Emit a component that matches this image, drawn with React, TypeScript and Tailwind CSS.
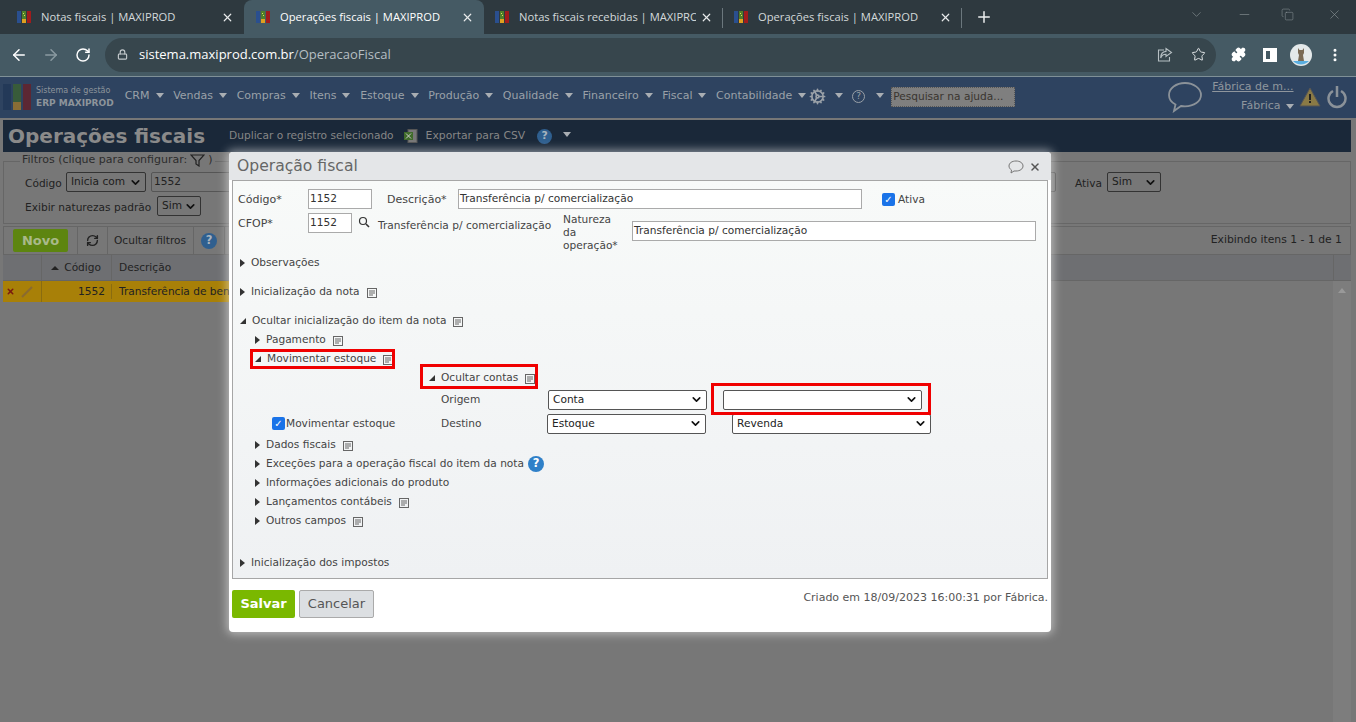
import { ArrowLeft, ArrowRight, ChevronDown, Cog, Copy, EllipsisVertical, Lock, Minus, Plus, Puzzle, RefreshCw, RotateCw, Star, X } from "lucide-react";

const ui = "font-['DejaVu_Sans',sans-serif]";

function Favicon() {
  return (
    <svg width="14" height="14" viewBox="0 0 14 14" className="shrink-0">
      <rect x="0" y="1" width="4" height="12" fill="#2a4f8f" />
      <rect x="5" y="1" width="4" height="12" fill="#4f7f2a" />
      <rect x="10" y="1" width="4" height="12" fill="#a01c1c" />
      <rect x="5" y="9" width="4" height="4" fill="#e0a020" />
      <rect x="6" y="3" width="1" height="1" fill="#d8e060" />
      <rect x="7" y="5" width="1" height="1" fill="#d8e060" />
    </svg>
  );
}

function Tab({ title, active, className, sep }: { title: string; active?: boolean; className: string; sep?: boolean }) {
  return (
    <div className={`relative flex h-[34px] items-center pr-[10px] text-[11.2px] font-['Open_Sans',sans-serif] ${className} ${active ? "rounded-t-lg bg-[#455a64] text-white" : "text-[#d4d9db]"}`}>
      <Favicon />
      <span className="min-w-0 flex-1 overflow-hidden whitespace-nowrap pl-[10px]">{title}</span>
      <X size={13} strokeWidth={2.2} className="ml-1 shrink-0 text-[#e8eaeb]" />
      {sep && <div className="absolute right-0 top-[8px] h-[20px] w-px bg-[#6b777d]" />}
    </div>
  );
}

function Caret({ className = "" }: { className?: string }) {
  return <span className={`inline-block h-0 w-0 border-x-[4px] border-t-[5px] border-x-transparent border-t-[#a9aeb3] ${className}`} />;
}

function Menu({ label }: { label: string }) {
  return (
    <span className="flex items-center gap-[6px] whitespace-nowrap text-[11px] text-[#9aa1a8]">
      {label}
      <Caret className="mb-[3px]" />
    </span>
  );
}

function Select({ value, w }: { value: string; w: string }) {
  return (
    <span className={`flex h-[20px] ${w} items-center justify-between rounded-[2px] border border-[#555] bg-white pl-[4px] pr-[3px] text-[10.6px] text-[#222]`}>
      <span>{value}</span>
      <ChevronDown size={13} strokeWidth={3} className="text-[#111]" />
    </span>
  );
}

function DimSelect({ value, w }: { value: string; w: string }) {
  return (
    <span className={`flex h-[20px] ${w} shrink-0 items-center justify-between rounded-[2px] border border-[#333] bg-[#777] pl-[4px] pr-[3px] text-[10.6px] text-[#1c1c1c]`}>
      <span>{value}</span>
      <ChevronDown size={13} strokeWidth={3} className="text-[#111]" />
    </span>
  );
}

function DocIcon() {
  return (
    <svg width="10" height="10" viewBox="0 0 10 10" className="mt-[3px] shrink-0">
      <rect x="0.5" y="0.5" width="9" height="9" fill="none" stroke="#666" />
      <path d="M2 3h6M2 5h6M2 7h4" stroke="#666" />
    </svg>
  );
}

function Help({ size = 16, dim = false }: { size?: number; dim?: boolean }) {
  return (
    <span
      style={{ width: size, height: size, fontSize: size * 0.72 }}
      className={`flex shrink-0 items-center justify-center rounded-full font-bold ${dim ? "bg-[#2f5f8f] text-[#a9b4be]" : "bg-[#2f80c8] text-white"}`}
    >
      ?
    </span>
  );
}

function Tree({ label, open, doc, extra }: { label: string; open?: boolean; doc?: boolean; extra?: React.ReactNode }) {
  return (
    <div className="flex h-[19px] items-center whitespace-nowrap text-[10.6px] leading-[19px] text-[#444]">
      {open ? (
        <span className="ml-[2px] mr-[6px] h-0 w-0 border-b-[6px] border-l-[6px] border-b-[#333] border-l-transparent" />
      ) : (
        <span className="ml-[2px] mr-[6px] h-0 w-0 border-y-[4px] border-l-[5px] border-y-transparent border-l-[#333]" />
      )}
      {label}
      {doc && <span className="ml-[7px] flex"><DocIcon /></span>}
      {extra}
    </div>
  );
}

function Field({ value, w, className = "" }: { value: string; w: string; className?: string }) {
  return <span className={`flex h-[20px] ${w} shrink-0 items-center border border-[#aaa] bg-white px-[1px] text-[10.6px] text-[#333] ${className}`}>{value}</span>;
}

function Check() {
  return <span className="inline-block h-[13px] w-[13px] shrink-0 rounded-[2px] bg-[#1a73e8] text-center align-middle text-[10px] font-bold leading-[13px] text-white">✓</span>;
}

export default function App() {
  return (
    <div className={`relative h-[722px] w-[1356px] overflow-hidden bg-[#777] ${ui}`}>
      {/* browser chrome */}
      <div className="flex h-[34px] items-start bg-[#2e393f]">
        <Tab title="Notas fiscais | MAXIPROD" className="w-[244px] pl-[17px]" />
        <Tab title="Operações fiscais | MAXIPROD" active className="w-[240px] pl-[12px]" />
        <Tab title="Notas fiscais recebidas | MAXIPROD" className="w-[239px] pl-[11px]" sep />
        <Tab title="Operações fiscais | MAXIPROD" className="w-[239px] pl-[11px]" sep />
        <Plus size={18} strokeWidth={2} className="ml-[13px] mt-[8px] text-[#eceeef]" />
        <div className="ml-auto flex pt-[7px] text-[#8b9599]">
          <ChevronDown size={15} strokeWidth={1} className="mr-[33px]" />
          <Minus size={15} strokeWidth={1} className="mr-[29px]" />
          <Copy size={13} strokeWidth={1} className="mr-[33px] mt-px" />
          <X size={15} strokeWidth={1} className="mr-[14px]" />
        </div>
      </div>
      <div className="flex h-[43px] items-center border-b border-[#7f9097] bg-[#455a64] pb-px">
        <ArrowLeft size={18} strokeWidth={2} className="ml-[10px] text-white" />
        <ArrowRight size={18} strokeWidth={2} className="ml-[14px] text-[#8a9aa1]" />
        <RotateCw size={16} strokeWidth={2.2} className="ml-[15px] text-white" />
        <div className="ml-[14px] flex h-[34px] w-[1111px] items-center rounded-full bg-[#37464d] pl-[12px] font-['Open_Sans',sans-serif] text-[13px]">
          <Lock size={11} strokeWidth={2.5} className="text-[#c4cacd]" />
          <span className="ml-[11px] text-white">sistema.maxiprod.com.br</span>
          <span className="text-[#b6bfc3]">/OperacaoFiscal</span>
          <svg width="16" height="16" viewBox="0 0 16 16" fill="none" stroke="#b6bfc3" strokeWidth="1.100" className="ml-auto">
            <path d="M7 3H1.500v11h11v-4" />
            <path d="M9 1.500l5.500 4-5.500 4V7.200C6.500 7.200 4.500 8.500 3.700 11c0-4 2-6.300 5.300-6.600z" />
          </svg>
          <Star size={15} strokeWidth={1.6} className="ml-[18px] mr-[10px] text-[#dfe3e5]" />
        </div>
        <Puzzle size={15} fill="white" className="ml-[15px] text-white" />
        <span className="ml-[17px] h-[14px] w-[14px] border-[3px] border-r-[7px] border-white" />
        <svg width="22" height="22" viewBox="0 0 22 22" className="ml-[13px]">
          <circle cx="11" cy="11" r="11" fill="#e4e9ea" />
          <path d="M3 17h16a11 11 0 0 1-16 0z" fill="#5aaee0" />
          <path d="M8 4l1.500 2h3L14 4v5l-1 2 1 6H8l1-6-1-2z" fill="#7a6a55" />
        </svg>
        <EllipsisVertical size={16} strokeWidth={2.5} className="ml-[15px] text-white" />
      </div>

      {/* app menu */}
      <div className="flex h-[41px] items-center bg-[#2e4360] pb-[2px]">
        <div className="ml-[3px] opacity-60"><svg width="28" height="26" viewBox="0 0 28 26"><rect width="8" height="26" fill="#1c3454" /><rect x="10" width="8" height="26" fill="#3f6b22" /><rect x="20" width="8" height="26" fill="#7c1616" /><rect x="10" y="18" width="8" height="8" fill="#c58a1a" /></svg></div>
        <div className="ml-[5px] mr-[11px] flex flex-col text-[#8d949b]">
          <span className="text-[8px] leading-[13px]">Sistema de gestão</span>
          <span className="text-[9px] font-bold leading-[12px]">ERP MAXIPROD</span>
        </div>
        <div className="flex items-center gap-[9.67px]">
          {["CRM", "Vendas", "Compras", "Itens", "Estoque", "Produção", "Qualidade", "Financeiro", "Fiscal", "Contabilidade"].map((m) => (
            <Menu key={m} label={m} />
          ))}
        </div>
        <Cog size={17} strokeWidth={2.4} className="ml-[3px] text-[#9aa1a8]" />
        <Caret className="ml-[9px] mb-[3px]" />
        <span className="ml-[9px] flex h-[13px] w-[13px] items-center justify-center rounded-full border border-[#9aa1a8] text-[9px] text-[#9aa1a8]">?</span>
        <Caret className="ml-[11px] mb-[3px]" />
        <span className="ml-[7px] flex h-[20px] w-[124px] items-center border border-dotted border-[#555] bg-[#7f7f7f] pl-px text-[10.6px] text-[#3a3530]">Pesquisar na ajuda...</span>
        <svg width="36" height="32" viewBox="0 0 36 32" className="ml-[152px]">
          <path d="M18 2C9 2 2 7.500 2 14c0 4 2.500 7.500 6.500 9.500L7 30l7-5c1.300.2 2.600.3 4 .3 9 0 16-5 16-11.300S27 2 18 2z" fill="none" stroke="#8b9299" strokeWidth="1.800" />
        </svg>
        <div className="ml-[9px] flex flex-col items-end text-[11px] text-[#8f969d]">
          <span className="underline">Fábrica de m...</span>
          <span className="mt-[3px] flex items-center gap-[5px]">Fábrica<Caret /></span>
        </div>
        <svg width="22" height="22" viewBox="0 0 22 22" className="ml-[5px]"><path d="M11 2 21 20H1z" fill="#8a7a45" stroke="#555" /><rect x="10" y="8" width="2" height="6" fill="#222" /><rect x="10" y="15" width="2" height="2" fill="#222" /></svg>
        <svg width="20" height="24" viewBox="0 0 20 24" className="ml-[6px]"><path d="M6 6a8.500 8.500 0 1 0 8 0M10 1v11" fill="none" stroke="#8b9299" strokeWidth="2.500" /></svg>
      </div>

      {/* dimmed page */}
      <div className="ml-[1px] mr-[3px] border-x-2 border-t-2 border-[#777]">
        <div className="flex h-[32px] items-center bg-[#1a2839] pl-[5px]">
          <span className="text-[20px] font-bold text-[#8a8a8a]">Operações fiscais</span>
          <span className="ml-[24px] text-[10.6px] text-[#868686]">Duplicar o registro selecionado</span>
          <svg width="17" height="14" viewBox="0 0 17 14" className="ml-[10px]">
            <rect x="4" y="0.5" width="9" height="13" fill="#777" stroke="#555" />
            <rect x="0" y="3" width="9" height="8" fill="#3f6b2a" />
            <path d="M2 4.500l5 5M7 4.500l-5 5" stroke="#ccc" />
          </svg>
          <span className="ml-[5px] text-[10.8px] text-[#868686]">Exportar para CSV</span>
          <span className="ml-[12px]"><Help size={15} dim /></span>
          <Caret className="ml-[11px] mb-[3px]" />
        </div>
        <div className="relative mt-[9px] h-[63px] border border-[#666] pl-[21px] pt-[10px] text-[10.6px] text-[#222]">
          <span className="absolute left-[16px] -top-[10px] flex items-center gap-[3px] bg-[#777] px-[2px] text-[11px] text-[#2c2c2c]">
            Filtros (clique para configurar:
            <svg width="15" height="13" viewBox="0 0 15 13" fill="none" stroke="#222" strokeWidth="1.200"><path d="M1 1h13L9 6.500V12L6 10V6.500z" /></svg>
            )
          </span>
          <div className="flex items-center">
            <span className="w-[41px] pt-[3px]">Código</span>
            <DimSelect value="Inicia com" w="w-[80px]" />
            <span className="ml-[5px] flex h-[20px] w-[905px] shrink-0 items-center rounded-[2px] border border-[#555] pl-[2px]">1552</span>
            <span className="ml-[19px] w-[32px] pt-[3px]">Ativa</span>
            <DimSelect value="Sim" w="w-[54px]" />
          </div>
          <div className="mt-[4px] flex items-center">
            <span className="w-[132px] whitespace-nowrap pt-[3px]">Exibir naturezas padrão</span>
            <DimSelect value="Sim" w="w-[44px]" />
          </div>
        </div>
        <div className="mt-[2px] flex h-[29px] items-center border border-[#666] text-[10.6px] text-[#222]">
          <span className="ml-[9px] flex h-[23px] w-[55px] items-center justify-center rounded-[2px] bg-[#5d8510] text-[13px] font-bold text-[#a9b98a]">Novo</span>
          <span className="ml-[9px] h-full border-l border-[#666]" />
          <span className="flex w-[29px] justify-center"><RefreshCw size={13} strokeWidth={2.6} className="text-[#222]" /></span>
          <span className="h-full border-l border-[#666]" />
          <span className="w-[85px] whitespace-nowrap pl-[6px]">Ocultar filtros</span>
          <span className="flex h-full items-center border-l border-[#666] px-[7px]"><Help size={16} dim /></span>
          <span className="h-full border-l border-[#666]" />
          <span className="ml-auto mr-[8px] text-[10.8px]">Exibindo itens 1 - 1 de 1</span>
        </div>
        <div className="flex h-[26px] items-center border-b border-[#666] bg-[#6e6f72] text-[10.6px] text-[#222]">
          <span className="h-full w-[39px] border-r border-[#666]" />
          <span className="flex h-full w-[70px] items-center justify-end border-r border-[#666] pr-[10px]">
            <span className="mr-[5px] h-0 w-0 border-x-[4px] border-b-[4px] border-x-transparent border-b-[#222]" />
            Código
          </span>
          <span className="pl-[7px]">Descrição</span>
          <span className="ml-auto h-full w-[18px] border-l border-[#666]" />
        </div>
        <div className="flex items-start">
          <div className="flex h-[22px] w-[500px] items-center border-b border-[#777] bg-[#a88008] text-[10.6px] text-[#222]">
            <span className="flex h-full w-[39px] items-center border-r border-[#8a6c10] pl-[3px]">
              <X size={9} strokeWidth={4} className="text-[#7a1a10]" />
              <svg width="13" height="13" viewBox="0 0 13 13" className="ml-[6px]"><path d="M1 12 11 2" stroke="#8a6a30" strokeWidth="2" /></svg>
            </span>
            <span className="w-[70px] border-r border-[#8a6c10] pr-[6px] text-right">1552</span>
            <span className="pl-[7px]">Transferência de bens</span>
          </div>
          <span className="ml-auto flex h-[441px] w-[18px] justify-center bg-[#7d7d7d] pt-[7px]">
            <span className="h-0 w-0 border-x-[4px] border-b-[5px] border-x-transparent border-b-[#999]" />
          </span>
        </div>
      </div>

      {/* modal */}
      <div className="absolute left-[229px] top-[152px] h-[480px] w-[822px] rounded-[4px] bg-white shadow-[0_0_10px_2px_rgba(255,255,255,0.5)]">
        <div className="flex h-[28px] items-center rounded-t-[4px] bg-[#e4e6e8] pl-[8px] pr-[10px] pt-[2px]">
          <span className="text-[15.6px] text-[#666]">Operação fiscal</span>
          <svg width="16" height="14" viewBox="0 0 16 14" className="ml-auto"><path d="M8 1C4 1 1 3 1 6c0 1.800 1 3 2.500 4L3 13l3-2h2c4 0 7-2 7-5S12 1 8 1z" fill="none" stroke="#777" /></svg>
          <X size={12} strokeWidth={3} className="ml-[5px] text-[#555]" />
        </div>
        <div className="mx-[3px] h-[399px] border border-[#a6a6a6] bg-linear-to-b from-[#f8faf9] to-[#eff1f3] pl-[5px] pt-[8px] text-[11px] text-[#444]">
          <div className="flex h-[20px] items-center">
            <span className="w-[70px] pt-[2px]">Código*</span>
            <Field value="1152" w="w-[64px]" />
            <span className="ml-[15px] w-[71px] pt-[2px]">Descrição*</span>
            <Field value="Transferência p/ comercialização" w="w-[404px]" />
            <span className="ml-[20px] flex"><Check /></span>
            <span className="ml-[3px] pt-[2px] text-[10.6px]">Ativa</span>
          </div>
          <div className="mt-[4px] flex h-[38px]">
            <span className="mt-[3px] w-[70px]">CFOP*</span>
            <Field value="1152" w="w-[44px]" />
            <svg width="12" height="12" viewBox="0 0 12 12" className="ml-[6px] mt-[3px]"><circle cx="5" cy="5" r="3.500" fill="none" stroke="#333" strokeWidth="1.200" /><path d="M8 8l3 3" stroke="#333" strokeWidth="1.600" /></svg>
            <span className="ml-[8px] mt-[5px] w-[185px] whitespace-nowrap text-[10.6px]">Transferência p/ comercialização</span>
            <span className="w-[69px] text-[10.6px] leading-[13px]">Natureza<br />da<br />operação*</span>
            <Field value="Transferência p/ comercialização" w="w-[404px]" className="mt-[8px]" />
          </div>
          <div className="mt-[2px] flex flex-col">
            <Tree label="Observações" />
            <div className="mt-[10px]"><Tree label="Inicialização da nota" doc /></div>
            <div className="mt-[10px]"><Tree label="Ocultar inicialização do item da nota" open doc /></div>
            <div className="flex flex-col pl-[15px]">
              <Tree label="Pagamento" doc />
              <Tree label="Movimentar estoque" open doc />
              <div className="ml-[174px]"><Tree label="Ocultar contas" open doc /></div>
              <div className="flex h-[24px] items-center pt-[1px] text-[10.6px]">
                <span className="ml-[188px] w-[107px]">Origem</span>
                <Select value="Conta" w="w-[159px]" />
                <span className="ml-[16px]"><Select value="" w="w-[199px]" /></span>
              </div>
              <div className="flex h-[24px] items-center pt-[1px] text-[10.6px]">
                <span className="ml-[19px] flex"><Check /></span>
                <span className="w-[156px] pl-px">Movimentar estoque</span>
                <span className="w-[106px]">Destino</span>
                <Select value="Estoque" w="w-[159px]" />
                <span className="ml-[26px]"><Select value="Revenda" w="w-[199px]" /></span>
              </div>
              <Tree label="Dados fiscais" doc />
              <Tree label="Exceções para a operação fiscal do item da nota" extra={<span className="ml-[4px]"><Help /></span>} />
              <Tree label="Informações adicionais do produto" />
              <Tree label="Lançamentos contábeis" doc />
              <Tree label="Outros campos" doc />
            </div>
            <div className="mt-[23px]"><Tree label="Inicialização dos impostos" /></div>
          </div>
        </div>
        <div className="mx-[3px] mt-[11px] flex items-start">
          <span className="flex h-[28px] w-[63px] items-center justify-center rounded-[2px] bg-[#7ab800] text-[13px] font-bold text-white">Salvar</span>
          <span className="ml-[4px] flex h-[28px] w-[75px] items-center justify-center rounded-[2px] border border-[#aaa] bg-[#dcdfe2] text-[13px] text-[#555]">Cancelar</span>
          <span className="ml-auto text-[11px] text-[#555]">Criado em 18/09/2023 16:00:31 por Fábrica.</span>
        </div>

        {/* red highlight boxes */}
        <div className="absolute left-[21px] top-[197px] h-[20px] w-[145px] border-[3px] border-[#f00000]" />
        <div className="absolute left-[191px] top-[212px] h-[25px] w-[118px] border-[3px] border-[#f00000]" />
        <div className="absolute left-[482px] top-[231px] h-[32px] w-[220px] border-[3px] border-[#f00000]" />
      </div>
    </div>
  );
}
